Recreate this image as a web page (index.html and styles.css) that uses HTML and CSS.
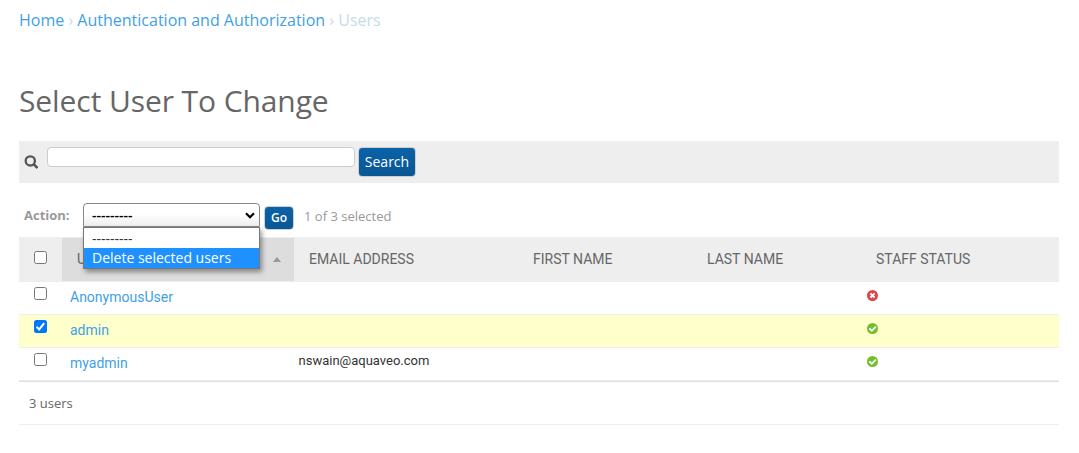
FILE: index.html
```
<!DOCTYPE html>
<html lang="en">
<head>
<meta charset="utf-8">
<title>Select user to change</title>
<link rel="stylesheet" href="styles.css">
</head>
<body>
<nav class="breadcrumbs"><a>Home</a> › <a>Authentication and Authorization</a> › Users</nav>
<main>
<h1>Select User To Change</h1>
<div class="toolbar">
  <svg class="search-icon" viewBox="0 0 14 14" width="14" height="14"><circle cx="6.3" cy="5.9" r="4.6" fill="none" stroke="#555" stroke-width="2.3"/><path d="M9.6 9.2l3.9 3.9" stroke="#555" stroke-width="2.5"/></svg>
  <input class="search-input" type="text" aria-label="Search">
  <button class="btn search-btn">Search</button>
</div>
<div class="actions">
  <span class="action-label">Action:</span>
  <div class="select">
    <span class="value">---------</span>
    <svg class="chevron" width="10" height="7" viewBox="0 0 10 7"><path d="M1 1.2l4 4 4-4" fill="none" stroke="#000" stroke-width="2.2"/></svg>
    <div class="menu"><div class="option">---------</div><div class="option active">Delete selected users</div></div>
  </div>
  <button class="btn go-btn">Go</button>
  <span class="counter">1 of 3 selected</span>
</div>
<div class="table">
  <div class="row head">
    <div class="check"><span class="box"></span></div>
    <div class="sorted"><span>USERNAME</span><i class="arrow"></i></div>
    <div>EMAIL ADDRESS</div><div>FIRST NAME</div><div>LAST NAME</div><div>STAFF STATUS</div>
  </div>
  <div class="row">
    <div class="check"><span class="box"></span></div>
    <div class="name"><a>AnonymousUser</a></div><div class="email"></div><div></div><div></div>
    <div class="status"><svg width="11" height="11" viewBox="0 0 11 11"><circle cx="5.5" cy="5.5" r="5.5" fill="#dd4646"/><path d="M3.4 3.4l4.2 4.2M7.6 3.4l-4.2 4.2" stroke="#fff" stroke-width="2"/></svg></div>
  </div>
  <div class="row selected">
    <div class="check"><span class="box checked"><svg width="13" height="13" viewBox="0 0 13 13"><path d="M2.6 6.8l2.6 2.6 5-6.2" fill="none" stroke="#fff" stroke-width="2"/></svg></span></div>
    <div class="name"><a>admin</a></div><div class="email"></div><div></div><div></div>
    <div class="status"><svg width="11" height="11" viewBox="0 0 11 11"><circle cx="5.5" cy="5.5" r="5.5" fill="#70bf2b"/><path d="M2.3 5.3l2.5 2.4 4.1-4" fill="none" stroke="#fff" stroke-width="1.7"/></svg></div>
  </div>
  <div class="row">
    <div class="check"><span class="box"></span></div>
    <div class="name"><a>myadmin</a></div><div class="email">nswain@aquaveo.com</div><div></div><div></div>
    <div class="status"><svg width="11" height="11" viewBox="0 0 11 11"><circle cx="5.5" cy="5.5" r="5.5" fill="#70bf2b"/><path d="M2.3 5.3l2.5 2.4 4.1-4" fill="none" stroke="#fff" stroke-width="1.7"/></svg></div>
  </div>
</div>
<div class="paginator">3 users</div>
</main>
</body>
</html>
```
FILE: styles.css
```
* { box-sizing: border-box; }
body { margin: 0; padding: 0 20px 0 19px; background: #fff; color: #666; font-family: "Open Sans", sans-serif; overflow: hidden; }
a { color: #419fe8; }
.breadcrumbs { height: 41px; line-height: 41px; font-size: 16px; color: #c4dce8; white-space: nowrap; }
h1 { margin: 40px 0 20px; height: 40px; line-height: 40px; font-size: 30px; font-weight: 400; letter-spacing: -.09px; white-space: nowrap; }
.toolbar { display: flex; align-items: flex-start; height: 42px; background: #eee; padding: 6px 5px; }
.search-icon { margin: 8px 9px 0 0; }
.search-input { width: 308px; height: 20px; border: 1px solid #ccc; border-radius: 4px; background: #fff; padding: 0 5px; }
.btn { border: 1px solid #cfcfcf; border-radius: 4px; padding: 0; background: linear-gradient(#0a62a9, #0a5794); color: #fff; font-family: "Open Sans", sans-serif; }
.search-btn { margin-left: 3px; width: 58px; height: 30px; padding-bottom: 2px; font-size: 14px; }
.actions { display: flex; align-items: flex-start; height: 54px; padding: 20px 5px 0; white-space: nowrap; }
.action-label { width: 59px; line-height: 25px; font-size: 13px; font-weight: 700; color: #999; }
.select { position: relative; display: flex; align-items: center; justify-content: space-between; width: 177px; height: 24px; padding: 0 4px 0 8px; border: 1px solid #888; border-radius: 4px 4px 1px 1px; background: linear-gradient(#fff 45%, #eee); color: #000; font-size: 14px; }
.value { font-size: 14px; font-weight: 600; line-height: 20px; }
.menu { position: absolute; z-index: 2; left: -1px; top: 23px; width: 177px; border: 1px solid #777; background: #fff; box-shadow: 2px 3px 5px rgba(0,0,0,.4); font-size: 14px; }
.option { height: 20px; line-height: 21px; padding-left: 8px; color: #333; }
.option.active { line-height: 20px; background: #1e90ff; color: #fff; }
.go-btn { margin: 3px 0 0 4px; width: 30px; height: 24px; padding-bottom: 2px; font-size: 12px; font-weight: 600; }
.counter { margin-left: 10px; line-height: 26px; font-size: 13px; color: #999; }
.table { border-bottom: 1px solid #ddd; font-family: Roboto, sans-serif; }
.row { display: grid; grid-template-columns: 43px 232px 224px 174px 169px 198px; height: 33px; border-bottom: 1px solid #eee; }
.row.selected { background: #ffffcc; }
.head { height: 45px; background: #eee; font-size: 14px; padding: 1px 0 0; }
.head > div { padding-left: 15px; height: 43px; line-height: 43px; white-space: nowrap; }
.head > .sorted { display: flex; align-items: center; justify-content: space-between; background: #ddd; padding-right: 13px; }
.arrow { width: 0; height: 0; border: 4px solid transparent; border-top: 0; border-bottom: 5px solid #999; }
.row > .check { padding: 5px 0 0 15px; line-height: 0; }
.head > .check { padding-top: 13px; line-height: 0; }
.box { display: block; width: 13px; height: 13px; border: 1px solid #767676; border-radius: 2.5px; background: #fff; }
.box.checked { border: 0; background: #0075ff; }
.name { padding-left: 8px; line-height: 31px; font-size: 14px; }
.email { padding-left: 4.5px; line-height: 26px; font-size: 13px; color: #333; }
.status { padding: 8px 0 0 6px; line-height: 0; }
.paginator { height: 43px; line-height: 43px; padding-left: 10px; border-bottom: 1px solid #eee; font-size: 13px; }
```
